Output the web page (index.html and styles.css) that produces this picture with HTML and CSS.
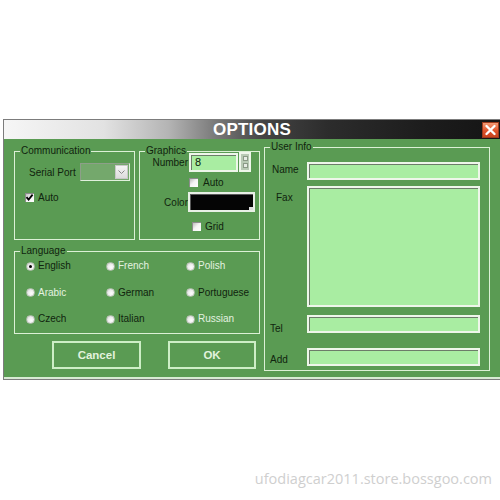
FILE: index.html
```html
<!DOCTYPE html>
<html>
<head>
<meta charset="utf-8">
<link rel="stylesheet" href="styles.css">
</head>
<body>
<div class="dialog">
  <div class="titlebar">
    <span class="title">OPTIONS</span>
    <span class="close"><svg width="17" height="16" viewBox="0 0 17 16"><path d="M4.5 4 L12.5 12 M12.5 4 L4.5 12" stroke="#fff" stroke-width="2.4" stroke-linecap="round"/></svg></span>
  </div>
  <div class="body">
    <div class="left">
      <div class="toprow">
        <fieldset class="grp comm">
          <legend>Communication</legend>
          <div class="serial-row">
            <span class="serial-label">Serial Port</span>
            <span class="combo"><span class="drop"><svg width="7" height="4" viewBox="0 0 7 4"><path d="M0.5 0.5 L3.5 3.5 L6.5 0.5" fill="none" stroke="#8a8a8a" stroke-width="1"/></svg></span></span>
          </div>
          <div class="check-row comm-auto">
            <span class="check"><svg width="9" height="9" viewBox="0 0 9 9"><path d="M1.5 4.2 L3.6 6.6 L7.6 1.6" fill="none" stroke="#000" stroke-width="1.8"/></svg></span>
            <span class="lbl">Auto</span>
          </div>
        </fieldset>
        <fieldset class="grp graphics">
          <legend>Graphics</legend>
          <div class="g-row num-row">
            <span class="g-label">Number</span>
            <span class="num-input">8</span>
            <span class="spin"><span class="spin-btn"></span><span class="spin-btn"></span></span>
          </div>
          <div class="check-row g-auto">
            <span class="check"></span>
            <span class="lbl">Auto</span>
          </div>
          <div class="g-row color-row">
            <span class="g-label">Color</span>
            <span class="color-box"><span class="color-mark"></span></span>
          </div>
          <div class="check-row g-grid">
            <span class="check"></span>
            <span class="lbl">Grid</span>
          </div>
        </fieldset>
      </div>
      <fieldset class="grp lang">
        <legend>Language</legend>
        <div class="radios">
          <div class="radio-item"><span class="radio on"></span><span class="lbl">English</span></div>
          <div class="radio-item"><span class="radio"></span><span class="lbl light">French</span></div>
          <div class="radio-item"><span class="radio"></span><span class="lbl light">Polish</span></div>
          <div class="radio-item"><span class="radio"></span><span class="lbl light">Arabic</span></div>
          <div class="radio-item"><span class="radio"></span><span class="lbl">German</span></div>
          <div class="radio-item"><span class="radio"></span><span class="lbl">Portuguese</span></div>
          <div class="radio-item"><span class="radio"></span><span class="lbl">Czech</span></div>
          <div class="radio-item"><span class="radio"></span><span class="lbl">Italian</span></div>
          <div class="radio-item"><span class="radio"></span><span class="lbl light">Russian</span></div>
        </div>
      </fieldset>
      <div class="buttons">
        <span class="btn cancel">Cancel</span>
        <span class="btn ok">OK</span>
      </div>
    </div>
    <fieldset class="grp user">
      <legend>User Info</legend>
      <div class="ui-rows">
        <div class="ui-row name-r">
          <span class="ui-label name-l">Name</span>
          <span class="field line-f"></span>
        </div>
        <div class="ui-row fax-r">
          <span class="ui-label fax-l">Fax</span>
          <span class="field fax-f"></span>
        </div>
        <div class="ui-row tel-r">
          <span class="ui-label tel-l">Tel</span>
          <span class="field line-f"></span>
        </div>
        <div class="ui-row add-r">
          <span class="ui-label add-l">Add</span>
          <span class="field line-f"></span>
        </div>
      </div>
    </fieldset>
  </div>
</div>
<div class="watermark">ufodiagcar2011.store.bossgoo.com</div>
</body>
</html>
```

FILE: styles.css
```css
* { box-sizing: border-box; }
html, body {
  margin: 0;
  padding: 0;
  background: #ffffff;
  overflow: hidden;
  width: 500px;
  height: 500px;
}
.dialog {
  margin: 119px 0 0 3px;
  width: 500px;
  border: 1px solid #7c7c7c;
  border-right: none;
  font-family: "Liberation Sans", Arial, sans-serif;
  font-size: 10px;
  color: #10240e;
}
.titlebar {
  height: 19px;
  display: flex;
  align-items: center;
  padding-left: 18px;
  background: linear-gradient(to right, #f6f6f6 0%, #e2e2e2 20%, #b4b4b4 33%, #7c7c7c 42%, #444 52%, #2c2c2c 65%, #1c1c1c 85%, #141414 100%);
}
.title {
  flex: 1;
  text-align: center;
  color: #ffffff;
  font-weight: bold;
  font-size: 17px;
  line-height: 19px;
  letter-spacing: 0.2px;
}
.close {
  width: 17px;
  height: 16px;
  margin-right: 4px;
  display: flex;
  background: linear-gradient(#f39a74, #e0552c 55%, #c8431e);
  border: 1px solid #9c3a1c;
  align-items: center;
  justify-content: center;
}
.close svg { display: block; margin: -1px; }
.body {
  display: flex;
  gap: 4px;
  height: 240px;
  padding-left: 10px;
  background: #5a9b53;
  box-shadow: inset 0 -2px 0 #d8ead4;
}
.left {
  width: 246px;
  padding-top: 6px;
  display: flex;
  flex-direction: column;
}
.toprow {
  display: flex;
  gap: 4px;
}
.grp {
  margin: 0;
  padding: 0;
  border: 1px solid #dcf0d6;
  min-width: 0;
}
.grp legend {
  font-size: 10px;
  line-height: 12px;
  padding: 0 1px;
  margin-left: 5px;
  color: #10240e;
}
.comm, .graphics {
  width: 121px;
  height: 95px;
}
.serial-row {
  display: flex;
  align-items: center;
  padding-top: 6px;
  padding-left: 14px;
  height: 24px;
}
.serial-label {
  width: 51px;
}
.combo {
  width: 50px;
  height: 18px;
  background: #74a86c;
  border: 1px solid;
  border-color: #8d9f89 #e0f0dc #e0f0dc #8d9f89;
  display: flex;
  align-items: center;
  justify-content: flex-end;
  padding-right: 1px;
}
.drop {
  width: 13px;
  height: 14px;
  background: linear-gradient(#f4f4f4, #dcdcdc);
  border: 1px solid #c8c8c8;
  display: flex;
  align-items: center;
  justify-content: center;
}
.drop svg { display: block; }
.check-row {
  display: flex;
  align-items: center;
  height: 9px;
}
.check {
  width: 9px;
  height: 9px;
  background: linear-gradient(135deg, #bdbdbd 0%, #f4f4f4 45%, #ffffff 100%);
  border-top: 1px solid #8c8c8c;
  border-left: 1px solid #8c8c8c;
  flex: none;
}
.check svg {
  display: block;
  margin: -1px 0 0 -1px;
}
.lbl {
  line-height: 12px;
  white-space: nowrap;
}
.comm-auto {
  margin-top: 12px;
  padding-left: 10px;
  gap: 4px;
}
.g-row {
  display: flex;
  align-items: center;
}
.g-label {
  width: 48px;
  text-align: right;
  flex: none;
}
.num-row {
  margin-top: -5px;
  height: 20px;
}
.num-input {
  width: 49px;
  height: 19px;
  margin-left: 1px;
  background: #a9eda2;
  border: 2px solid #eef6ea;
  box-shadow: inset 1px 1px 0 #6c7c69;
  padding-left: 4px;
  line-height: 15px;
  font-size: 11px;
  color: #0a1a08;
}
.spin {
  width: 12px;
  height: 20px;
  margin-left: 1px;
  border: 2px solid #eef6ea;
  background: #b8cab4;
  display: flex;
  flex-direction: column;
  align-items: center;
  justify-content: center;
  gap: 2px;
}
.spin-btn {
  width: 5px;
  height: 5px;
  background: #e6ece4;
  border: 1px solid #8a9a86;
}
.g-auto {
  margin-top: 6px;
  padding-left: 49px;
  gap: 5px;
}
.color-row {
  margin-top: 5px;
  height: 20px;
}
.color-box {
  width: 67px;
  height: 20px;
  background: #050505;
  border: 2px solid #e8f0e6;
  box-shadow: inset 1px 1px 0 #5a5a5a;
  position: relative;
}
.color-mark {
  position: absolute;
  right: 0;
  bottom: 0;
  width: 4px;
  height: 3px;
  background: #dcdcdc;
}
.g-grid {
  margin-top: 10px;
  padding-left: 52px;
  gap: 4px;
}
.lang {
  margin-top: 5px;
  height: 89px;
}
.radios {
  display: grid;
  grid-template-columns: 80px 80px 80px;
  grid-auto-rows: 14px;
  row-gap: 12.5px;
  padding-top: 2px;
  padding-left: 11px;
}
.radio-item {
  display: flex;
  align-items: center;
  gap: 3px;
}
.radio {
  width: 9px;
  height: 9px;
  border-radius: 50%;
  background: radial-gradient(circle at 60% 60%, #ffffff 0%, #ececec 50%, #c4c4c4 100%);
  border: 1px solid #b6c2b2;
  flex: none;
  display: flex;
  align-items: center;
  justify-content: center;
}
.radio.on::after {
  content: "";
  width: 3px;
  height: 3px;
  border-radius: 50%;
  background: #000;
}
.lbl.light {
  color: #e4f2e0;
}
.buttons {
  display: flex;
  gap: 27px;
  margin-top: 7px;
  padding-left: 38px;
}
.btn {
  width: 89px;
  height: 28px;
  border: 2px solid #cdeec6;
  color: #e2f2de;
  font-weight: bold;
  font-size: 11.5px;
  display: flex;
  align-items: center;
  justify-content: center;
}
.btn.ok { width: 88px; }
.user {
  margin-top: 2px;
  width: 226px;
  height: 230px;
}
.ui-rows {
  display: flex;
  flex-direction: column;
  padding-top: 9px;
}
.ui-row {
  display: flex;
  align-items: flex-start;
}
.fax-r { margin-top: 6px; }
.tel-r { margin-top: 8px; }
.add-r { margin-top: 13px; }
.ui-label {
  width: 42px;
  flex: none;
  line-height: 12px;
}
.name-l { padding-left: 7px; margin-top: 2px; }
.fax-l { padding-left: 11px; margin-top: 6px; }
.tel-l { padding-left: 5px; margin-top: 8px; }
.add-l { padding-left: 5px; margin-top: 6px; }
.field {
  width: 173px;
  background: #a9eda2;
  border: 2px solid #eef6ea;
  box-shadow: inset 1px 1px 0 #6c7c69;
}
.line-f { height: 18px; }
.fax-f { height: 121px; }
.watermark {
  margin-top: 90px;
  padding-right: 8px;
  text-align: right;
  font-family: "Open Sans", sans-serif;
  font-size: 14.5px;
  line-height: 18px;
  color: #cfcfcf;
}
```
